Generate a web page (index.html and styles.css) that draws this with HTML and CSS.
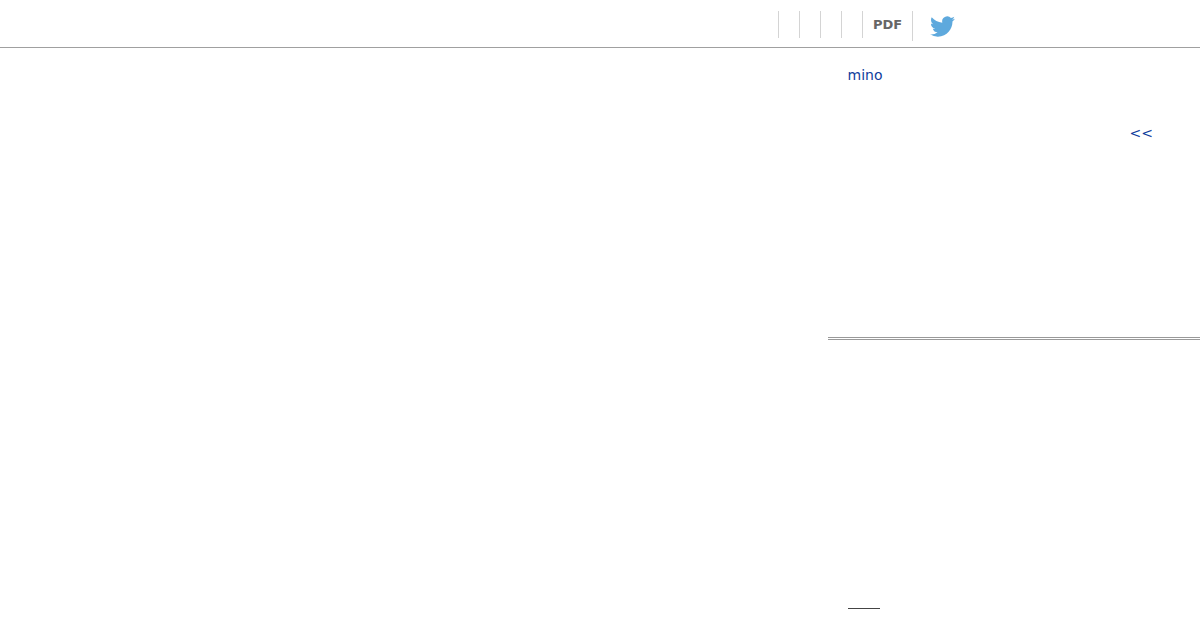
FILE: index.html
```html
<!DOCTYPE html>
<html lang="en">
<head>
    <meta charset="UTF-8">
    <title>mino</title>
    <link rel="stylesheet" href="styles.css">
</head>
<body>

<div class="top-bar">
    <div class="tool-item"></div>
    <div class="tool-item"></div>
    <div class="tool-item"></div>
    <div class="tool-item"></div>
    <div class="tool-item pdf-item"><a href="#" class="pdf-link">PDF</a></div>
    <div class="tool-item twitter-item">
        <svg class="twitter-icon" viewBox="0 0 24 24" width="25" height="25">
            <path d="M23.95 4.57a10 10 0 0 1-2.82.77 4.96 4.96 0 0 0 2.16-2.72c-.95.55-2 .96-3.13 1.19a4.92 4.92 0 0 0-8.38 4.48C7.69 8.1 4.07 6.13 1.64 3.16a4.82 4.82 0 0 0-.67 2.48c0 1.71.87 3.21 2.19 4.1a4.9 4.9 0 0 1-2.23-.62v.06a4.92 4.92 0 0 0 3.95 4.83 5 5 0 0 1-2.21.08 4.94 4.94 0 0 0 4.6 3.42A9.87 9.87 0 0 1 0 19.54a14 14 0 0 0 7.56 2.21c9.05 0 14-7.5 14-13.98 0-.21 0-.42-.02-.63a9.94 9.94 0 0 0 2.41-2.55z"/>
        </svg>
    </div>
</div>

<div class="page">
    <div class="side-panel">
        <div class="side-top">
            <a href="#" class="term-link">mino</a>
            <div class="back-row"><a href="#" class="back-link">&lt;&lt;</a></div>
        </div>
        <div class="side-bottom">
            <div class="note-rule"></div>
        </div>
    </div>
</div>

</body>
</html>
```

FILE: styles.css
```css
html, body {
    height: 100%;
}
body {
    font-family: 'DejaVu Sans', sans-serif;
    background-color: #fff;
    margin: 0;
    padding: 0;
    overflow: hidden;
}
a {
    color: #0f3d9c;
    text-decoration: none;
}
.top-bar {
    height: 47px;
    border-bottom: 1px solid #a0a0a0;
    display: flex;
    align-items: flex-start;
    padding-left: 778px;
}
.tool-item {
    width: 20px;
    height: 27px;
    margin-top: 11px;
    border-left: 1px solid #d4d4d4;
}
.pdf-item {
    width: 49px;
    display: flex;
    justify-content: center;
    align-items: center;
}
.pdf-link {
    color: #666;
    font-size: 13px;
    font-weight: bold;
}
.twitter-item {
    width: auto;
    height: 30px;
    padding-left: 17px;
    display: flex;
    align-items: center;
}
.twitter-icon {
    fill: #5ea9dd;
    flex-shrink: 0;
}
.page {
    display: flex;
    justify-content: flex-end;
}
.side-panel {
    width: 372px;
}
.side-top {
    height: 292px;
    box-sizing: border-box;
    padding: 18px 47px 0 19.5px;
    border-bottom: 3px double #999;
    font-size: 14px;
    line-height: 18px;
}
.back-row {
    margin-top: 40px;
    text-align: right;
}
.side-bottom {
    padding: 268px 0 0 20px;
}
.note-rule {
    width: 32px;
    border-top: 1px solid #444;
}
```
